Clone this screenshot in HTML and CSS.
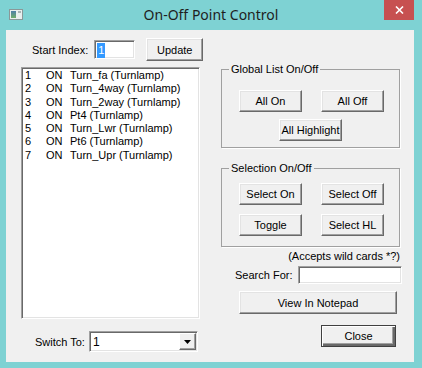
FILE: index.html
```html
<!DOCTYPE html>
<html>
<head>
<meta charset="utf-8"/>
<title>On-Off Point Control</title>
<link rel="stylesheet" href="styles.css">
</head>
<body>
<div class="window">
<div class="titlebar">
<svg class="app-icon" width="14" height="11" viewBox="0 0 14 11">
<defs>
<linearGradient id="ig" x1="0" y1="0" x2="0" y2="1">
<stop offset="0" stop-color="#4f7fa8"/>
<stop offset="1" stop-color="#6fae6a"/>
</linearGradient>
</defs>
<rect x="0.5" y="0.5" width="13" height="10" fill="#e9eeee" stroke="#8a9898"/>
<rect x="2" y="2" width="5" height="7" fill="url(#ig)"/>
<rect x="9" y="2" width="3" height="2" fill="#a9b4b4"/>
</svg>
<div class="title">On-Off Point Control</div>
<div class="close-btn">
<svg width="9" height="8" viewBox="0 0 9 8"><path d="M1 0.5 L8 7.5 M8 0.5 L1 7.5" stroke="#fff" stroke-width="1.6"/></svg>
</div>
</div>
<div class="client">
<div class="left">
<div class="start-row">
<span class="lbl">Start Index:</span>
<div class="field index-field"><span class="sel">1</span></div>
<div class="btn update-btn">Update</div>
</div>
<div class="listbox">
<div class="row"><span>1</span><span>ON</span><span>Turn_fa (Turnlamp)</span></div>
<div class="row"><span>2</span><span>ON</span><span>Turn_4way (Turnlamp)</span></div>
<div class="row"><span>3</span><span>ON</span><span>Turn_2way (Turnlamp)</span></div>
<div class="row"><span>4</span><span>ON</span><span>Pt4 (Turnlamp)</span></div>
<div class="row"><span>5</span><span>ON</span><span>Turn_Lwr (Turnlamp)</span></div>
<div class="row"><span>6</span><span>ON</span><span>Pt6 (Turnlamp)</span></div>
<div class="row"><span>7</span><span>ON</span><span>Turn_Upr (Turnlamp)</span></div>
</div>
<div class="switch-row">
<span class="lbl">Switch To:</span>
<div class="field combo">
<span class="combo-text">1</span>
<div class="combo-arrow"><svg width="7" height="4" viewBox="0 0 7 4"><path d="M0 0 H7 L3.5 4 Z" fill="#000"/></svg></div>
</div>
</div>
</div>
<div class="right">
<div class="group group-global">
<div class="group-title">Global List On/Off</div>
<div class="btn-pair first-pair">
<div class="btn">All On</div>
<div class="btn">All Off</div>
</div>
<div class="btn-center">
<div class="btn">All Highlight</div>
</div>
</div>
<div class="group group-sel">
<div class="group-title">Selection On/Off</div>
<div class="btn-pair first-pair">
<div class="btn">Select On</div>
<div class="btn">Select Off</div>
</div>
<div class="btn-pair">
<div class="btn">Toggle</div>
<div class="btn">Select HL</div>
</div>
</div>
<div class="hint">(Accepts wild cards *?)</div>
<div class="search-row">
<span class="lbl">Search For:</span>
<div class="field search-field"></div>
</div>
<div class="btn notepad-btn">View In Notepad</div>
<div class="btn close-dlg">Close</div>
</div>
</div>
</div>
</body>
</html>
```
FILE: styles.css
```css
body {
margin: 0;
background-color: #7ed2d3;
font-family: "Liberation Sans", Arial, sans-serif;
font-size: 11px;
color: #000;
}
.window {
width: 422px;
height: 368px;
display: flex;
flex-direction: column;
}
.titlebar {
height: 30px;
display: grid;
grid-template-columns: 60px 1fr 60px;
align-items: start;
}
.app-icon {
margin: 9px 0 0 9px;
}
.title {
text-align: center;
font-family: "Noto Sans", sans-serif;
font-size: 14px;
line-height: 30px;
color: #1e1e1e;
}
.close-btn {
justify-self: end;
margin-right: 8px;
width: 30px;
height: 20px;
background-color: #c75050;
display: flex;
align-items: center;
justify-content: center;
}
.client {
flex: 1;
margin: 0 8px 6px 6px;
background-color: #f0f0f0;
display: flex;
gap: 20px;
padding: 8px 0 0 15px;
}
.left {
width: 180px;
display: flex;
flex-direction: column;
}
.right {
width: 179px;
display: flex;
flex-direction: column;
padding-top: 31px;
}
.lbl {
white-space: nowrap;
flex-shrink: 0;
}
.btn {
box-sizing: border-box;
height: 22px;
width: 63px;
flex-shrink: 0;
background-color: #f0f0f0;
border: 1px solid;
border-color: #fff #696969 #696969 #fff;
box-shadow: inset -1px -1px #a0a0a0, inset 1px 1px #e3e3e3;
display: flex;
align-items: center;
justify-content: center;
white-space: nowrap;
}
.field {
box-sizing: border-box;
flex-shrink: 0;
background-color: #fff;
border: 1px solid;
border-color: #a0a0a0 #fff #fff #a0a0a0;
box-shadow: inset 1px 1px #696969, inset -1px -1px #e3e3e3;
}
.start-row {
display: flex;
align-items: center;
height: 23px;
padding-left: 11px;
}
.index-field {
width: 41px;
height: 19px;
margin-left: 6px;
padding: 2px 0 0 2px;
}
.sel {
display: inline-block;
background-color: #3399ff;
color: #fff;
height: 15px;
line-height: 14px;
padding: 0 1px;
}
.update-btn {
width: 57px;
height: 23px;
margin-left: 11px;
}
.listbox {
box-sizing: border-box;
width: 179px;
height: 252px;
margin-top: 6px;
background-color: #fff;
border: 1px solid;
border-color: #a0a0a0 #fff #fff #a0a0a0;
box-shadow: inset 1px 1px #696969, inset -1px -1px #e3e3e3;
padding: 1px 0 0 3px;
}
.row {
display: grid;
grid-template-columns: 21px 24px 1fr;
line-height: 13.3px;
white-space: nowrap;
}
.switch-row {
display: flex;
align-items: center;
margin-top: 12px;
padding-left: 14px;
}
.combo {
width: 109px;
height: 21px;
margin-left: 4px;
display: flex;
align-items: center;
justify-content: space-between;
padding: 0 1px 0 3px;
font-size: 12px;
}
.combo-arrow {
box-sizing: border-box;
width: 17px;
height: 17px;
background-color: #f0f0f0;
border: 1px solid;
border-color: #fff #696969 #696969 #fff;
box-shadow: inset -1px -1px #a0a0a0;
display: flex;
align-items: center;
justify-content: center;
}
.group {
box-sizing: border-box;
width: 179px;
height: 79px;
border: 1px solid #a0a0a0;
box-shadow: 1px 1px #fff;
padding: 0 17px;
}
.group-title {
display: table;
margin: -7px 0 0 -10px;
padding: 0 2px;
line-height: 12px;
background-color: #f0f0f0;
}
.group-global .first-pair {
margin-top: 15px;
}
.group-sel {
margin-top: 20px;
}
.group-sel .first-pair {
margin-top: 9px;
}
.btn-pair {
display: flex;
gap: 19px;
}
.btn-pair + .btn-pair {
margin-top: 9px;
}
.btn-center {
display: flex;
justify-content: center;
margin-top: 7px;
}
.hint {
text-align: right;
margin-top: 3px;
line-height: 13px;
white-space: nowrap;
}
.search-row {
display: flex;
align-items: center;
margin-top: 3px;
padding-left: 14px;
}
.search-field {
width: 104px;
height: 18px;
margin-left: 6px;
}
.notepad-btn {
width: 158px;
height: 23px;
margin: 7px 0 0 18px;
}
.close-dlg {
width: 75px;
height: 22px;
margin: 11px 0 0 100px;
border-color: #404040;
box-shadow: inset 1px 1px #fff, inset -2px -2px #696969, inset -3px -3px #a0a0a0;
}
```
